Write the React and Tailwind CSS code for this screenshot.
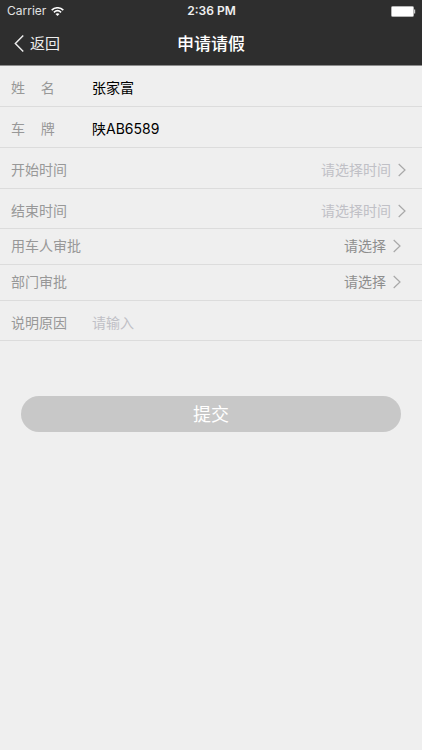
import { useState } from 'react';

function Chevron({ className = '', flip = false }) {
  return (
    <svg viewBox="0 0 8 14" fill="none" stroke="currentColor" strokeWidth="1.2" aria-hidden="true" className={className}>
      <path d={flip ? 'M7.5 0.5L1 7l6.5 6.5' : 'M0.7 1L7 7l-6.3 6'} />
    </svg>
  );
}

function StatusBar() {
  return (
    <div className="grid h-[22px] grid-cols-3 items-center pl-[7px] pr-[6px] text-xs">
      <div className="flex items-center gap-[5px] text-[#e2e2e2]">
        <span>Carrier</span>
        <svg viewBox="0 0 13 9" className="h-[9px] w-[13px]" fill="none" stroke="white" strokeWidth="1.6" aria-hidden="true">
          <path d="M0.7 3.1C4 0 9 0 12.3 3.1" />
          <path d="M2.9 5.3c2.1-1.9 5.1-1.9 7.2 0" />
          <path d="M4.5 6.9c1.2-1 2.8-1 4 0L6.5 9z" fill="white" stroke="none" />
        </svg>
      </div>
      <span className="text-center font-semibold text-[#f0f0f0]">2:36 PM</span>
      <svg viewBox="0 0 25 11" className="h-[11px] w-[25px] justify-self-end" aria-hidden="true">
        <rect x="0.5" y="0.5" width="22" height="10" rx="1" fill="white" stroke="#b5b5b5" />
        <path d="M23 3.5h1.2v4H23z" fill="#c9c9c9" />
      </svg>
    </div>
  );
}

function Row({ id, label, size = 'h-[41px] pt-1', children }) {
  return (
    <div className={`flex items-center border-b border-[#dcdcdc] pl-[11px] ${size}`}>
      <label htmlFor={id} className="w-[81px] shrink-0 whitespace-pre text-[#989898]">
        {label}
      </label>
      {children}
    </div>
  );
}

function TextRow({ id, label, size, ...rest }) {
  return (
    <Row id={id} label={label} size={size}>
      <input id={id} className="min-w-0 flex-1 bg-transparent text-black outline-none placeholder:text-[#c0c0c6]" {...rest} />
    </Row>
  );
}

function TimeRow({ id, label, size }) {
  return (
    <Row id={id} label={label} size={size}>
      <input
        id={id}
        readOnly
        placeholder="请选择时间"
        className="min-w-0 flex-1 bg-transparent text-right outline-none placeholder:text-[#c0c0c6]"
      />
      <Chevron className="ml-[7px] mr-4 h-[14px] w-2 shrink-0 text-[#a8a8a8]" />
    </Row>
  );
}

function SelectRow({ id, label }) {
  return (
    <Row id={id} label={label} size="h-9 pb-0.5">
      <div className="flex flex-1 justify-end">
        <select id={id} className="appearance-none bg-transparent text-right text-[#8e8e8e] outline-none">
          <option>请选择</option>
        </select>
      </div>
      <Chevron className="ml-[7px] mr-[21px] h-[14px] w-2 shrink-0 text-[#a8a8a8]" />
    </Row>
  );
}

export default function App() {
  const [name, setName] = useState('张家富');
  const [plate, setPlate] = useState('陕AB6589');

  return (
    <div className="min-h-screen bg-[#efefef] font-['Inter','Noto_Sans_CJK_SC',sans-serif] text-sm">
      <header className="border-b border-[#8c8c8c] bg-[#2e2e2e] text-white">
        <StatusBar />
        <nav className="grid h-[43px] grid-cols-3 items-center">
          <button type="button" className="flex items-center gap-[6px] pl-[14px] text-[15px] text-[#eeeeee]">
            <Chevron flip className="h-[17px] w-[10px]" />
            返回
          </button>
          <h1 className="pt-0.5 text-center text-[17px] font-medium">申请请假</h1>
        </nav>
      </header>
      <form onSubmit={(e) => e.preventDefault()}>
        <TextRow id="name" label="姓    名" value={name} onChange={(e) => setName(e.target.value)} />
        <TextRow id="plate" label="车    牌" value={plate} onChange={(e) => setPlate(e.target.value)} />
        <TimeRow id="start" label="开始时间" />
        <TimeRow id="end" label="结束时间" size="h-10 pt-1" />
        <SelectRow id="user-approval" label="用车人审批" />
        <SelectRow id="department-approval" label="部门审批" />
        <TextRow id="reason" label="说明原因" size="h-10 pt-1" placeholder="请输入" />
        <div className="px-[21px] pt-[55px]">
          <button type="submit" className="h-9 w-full rounded-full bg-[#c8c8c8] pt-0.5 text-lg text-white">
            提交
          </button>
        </div>
      </form>
    </div>
  );
}
